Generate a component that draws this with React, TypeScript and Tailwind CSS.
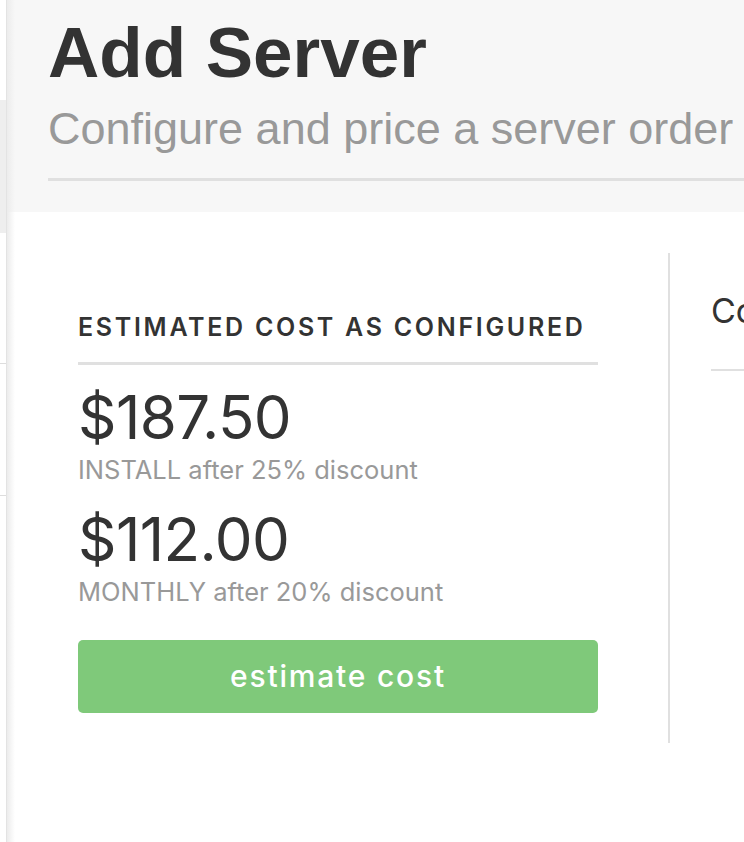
const App = () => {
  return (
    <div className="flex min-h-[842px] w-[744px] overflow-hidden bg-white font-['Inter',sans-serif] text-[#333]">
      <aside className="flex w-[7px] shrink-0 flex-col border-r border-[#e3e3e3] bg-white">
        <div className="h-[100px]" />
        <div className="h-[133px] bg-[#eeeeee]" />
        <div className="h-[131px] border-b border-[#dddddd]" />
        <div className="h-[132px] border-b border-[#dddddd]" />
      </aside>
      <main className="relative flex-1 min-w-0">
        <div className="pointer-events-none absolute inset-y-0 left-0 w-[8px] bg-gradient-to-r from-[#ececec] to-transparent" />
        <header className="h-[212px] bg-[#f7f7f7] pl-[41px] pt-[13px]">
          <h1 className="whitespace-nowrap font-['Liberation_Sans',Arial,sans-serif] text-[71px] font-bold leading-[80px] text-[#333]">
            Add Server
          </h1>
          <p className="mt-[12px] whitespace-nowrap font-['Liberation_Sans',Arial,sans-serif] text-[45px] leading-[48px] text-[#999]">
            Configure and price a server order
          </p>
          <div className="mt-[25px] h-[3px] bg-[#e0e0e0]" />
        </header>
        <section className="flex pt-[41px]">
          <div className="w-[663px] shrink-0 border-r-2 border-[#e0e0e0] pl-[71px] pr-[70px] pt-[59px] pb-[30px]">
            <h2 className="whitespace-nowrap text-[25px] font-semibold leading-[30px] tracking-[0.108em] text-[#333]">
              ESTIMATED COST AS CONFIGURED
            </h2>
            <div className="mt-[20px] h-[3px] bg-[#e0e0e0]" />
            <div className="mt-[20px] text-[60px] leading-[64px] tracking-[-0.01em] text-[#333]">$187.50</div>
            <div className="mt-[6px] text-[25.5px] leading-[30px] text-[#999]">INSTALL after 25% discount</div>
            <div className="mt-[22px] text-[60px] leading-[64px] tracking-[-0.01em] text-[#333]">$112.00</div>
            <div className="mt-[6px] text-[25.5px] leading-[30px] text-[#999]">MONTHLY after 20% discount</div>
            <button className="mt-[33px] flex h-[73px] w-full items-center justify-center rounded-[5px] bg-[#7fc97a] text-[30px] font-medium tracking-[0.06em] text-white">
              estimate cost
            </button>
          </div>
          <div className="min-w-0 flex-1 pl-[41px] pt-[38px]">
            <div className="whitespace-nowrap text-[34px] leading-[40px] text-[#333]">Configure</div>
            <div className="mt-[38px] h-[2px] bg-[#e0e0e0]" />
          </div>
        </section>
      </main>
    </div>
  );
};

export default App;
